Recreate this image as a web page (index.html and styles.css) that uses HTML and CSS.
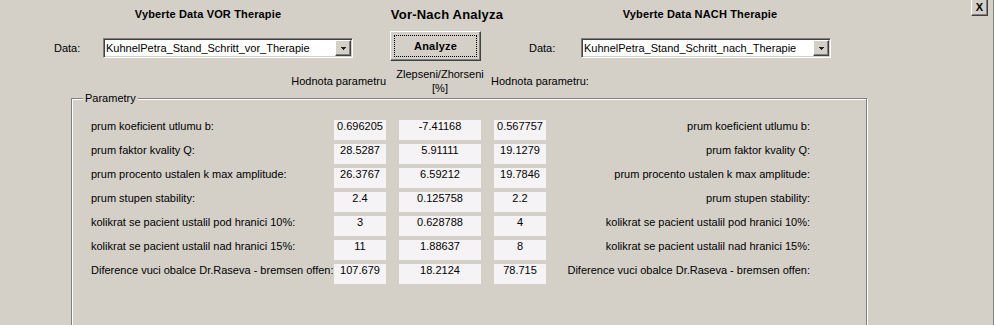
FILE: index.html
```html
<!DOCTYPE html>
<html lang="cs">
  <head>
    <meta charset="UTF-8" />
    <meta name="viewport" content="width=device-width, initial-scale=1.0" />
    <title>Vor-Nach Analyza</title>
    <link rel="stylesheet" href="styles.css">
  </head>
  <body>
    <div class="window">
      <button class="close">X</button>

      <div class="titles">
        <div class="title t-vor">Vyberte Data VOR Therapie</div>
        <div class="title title-main">Vor-Nach Analyza</div>
        <div class="title t-nach">Vyberte Data NACH Therapie</div>
      </div>

      <div class="controls">
        <label class="data-label">Data:</label>
        <div class="select">
          <span class="select-text">KuhnelPetra_Stand_Schritt_vor_Therapie</span>
          <span class="select-arrow">
            <svg width="5" height="3" viewBox="0 0 5 3" shape-rendering="crispEdges"><rect x="0" y="0" width="5" height="1" fill="#222"/><rect x="1" y="1" width="3" height="1" fill="#222"/><rect x="2" y="2" width="1" height="1" fill="#222"/></svg>
          </span>
        </div>
        <button class="analyze">Analyze</button>
        <label class="data-label second">Data:</label>
        <div class="select">
          <span class="select-text">KuhnelPetra_Stand_Schritt_nach_Therapie</span>
          <span class="select-arrow">
            <svg width="5" height="3" viewBox="0 0 5 3" shape-rendering="crispEdges"><rect x="0" y="0" width="5" height="1" fill="#222"/><rect x="1" y="1" width="3" height="1" fill="#222"/><rect x="2" y="2" width="1" height="1" fill="#222"/></svg>
          </span>
        </div>
      </div>

      <div class="col-heads">
        <div class="head head-vor">Hodnota parametru</div>
        <div class="head head-diff">Zlepseni/Zhorseni<br>[%]</div>
        <div class="head head-nach">Hodnota parametru:</div>
      </div>

      <fieldset class="panel">
        <legend>Parametry</legend>
        <div class="rows">
          <div class="row">
            <div class="label">prum koeficient utlumu b:</div>
            <div class="val">0.696205</div>
            <div class="val wide">-7.41168</div>
            <div class="val">0.567757</div>
            <div class="rlabel">prum koeficient utlumu b:</div>
          </div>
          <div class="row">
            <div class="label">prum faktor kvality Q:</div>
            <div class="val">28.5287</div>
            <div class="val wide">5.91111</div>
            <div class="val">19.1279</div>
            <div class="rlabel">prum faktor kvality Q:</div>
          </div>
          <div class="row">
            <div class="label">prum procento ustalen k max amplitude:</div>
            <div class="val">26.3767</div>
            <div class="val wide">6.59212</div>
            <div class="val">19.7846</div>
            <div class="rlabel">prum procento ustalen k max amplitude:</div>
          </div>
          <div class="row">
            <div class="label">prum stupen stability:</div>
            <div class="val">2.4</div>
            <div class="val wide">0.125758</div>
            <div class="val">2.2</div>
            <div class="rlabel">prum stupen stability:</div>
          </div>
          <div class="row">
            <div class="label">kolikrat se pacient ustalil pod hranici 10%:</div>
            <div class="val">3</div>
            <div class="val wide">0.628788</div>
            <div class="val">4</div>
            <div class="rlabel">kolikrat se pacient ustalil pod hranici 10%:</div>
          </div>
          <div class="row">
            <div class="label">kolikrat se pacient ustalil nad hranici 15%:</div>
            <div class="val">11</div>
            <div class="val wide">1.88637</div>
            <div class="val">8</div>
            <div class="rlabel">kolikrat se pacient ustalil nad hranici 15%:</div>
          </div>
          <div class="row">
            <div class="label">Diference vuci obalce Dr.Raseva - bremsen offen:</div>
            <div class="val">107.679</div>
            <div class="val wide">18.2124</div>
            <div class="val">78.715</div>
            <div class="rlabel">Diference vuci obalce Dr.Raseva - bremsen offen:</div>
          </div>
        </div>
      </fieldset>
    </div>
  </body>
</html>
```

FILE: styles.css
```css
html,
body {
  margin: 0;
  background-color: #d4d0c8;
}
body {
  font-family: "Liberation Sans", Arial, sans-serif;
  font-size: 11px;
  line-height: 13px;
  color: #000;
}
.window {
  position: relative;
  width: 993px;
  height: 325px;
  border-right: 1px solid #808080;
  overflow: hidden;
}
.close {
  position: absolute;
  top: -2px;
  right: 5px;
  width: 17px;
  height: 18px;
  padding: 1px 0 0;
  background-color: #d4d0c8;
  border: 1px solid;
  border-color: #fff #404040 #404040 #fff;
  box-shadow: inset -1px -1px 0 #808080;
  font-family: "Liberation Sans", Arial, sans-serif;
  font-size: 11px;
  font-weight: bold;
  line-height: 13px;
}

/* top titles */
.titles {
  display: flex;
  height: 31px;
  align-items: flex-start;
}
.title {
  width: 200px;
  text-align: center;
  font-weight: bold;
  margin-top: 8px;
  letter-spacing: 0.15px;
}
.t-vor {
  margin-left: 108px;
}
.title-main {
  margin-left: 39px;
  font-size: 13px;
  line-height: 15px;
  margin-top: 7px;
  letter-spacing: 0.2px;
}
.t-nach {
  margin-left: 53px;
}

/* select row */
.controls {
  display: flex;
  height: 31px;
  align-items: flex-start;
}
.data-label {
  width: 49px;
  margin-left: 54px;
  margin-top: 11px;
}
.data-label.second {
  width: 52px;
  margin-left: 48px;
}
.select {
  display: flex;
  box-sizing: border-box;
  width: 250px;
  height: 20px;
  margin-top: 7px;
  background-color: #fff;
  border: 1px solid;
  border-color: #808080 #fff #fff #808080;
  box-shadow: inset 1px 1px 0 #404040, inset -1px -1px 0 #d4d0c8;
  padding: 1px;
}
.select-text {
  flex: 1;
  padding: 1px 0 0 1px;
  line-height: 15px;
  white-space: nowrap;
  overflow: hidden;
}
.select-arrow {
  display: flex;
  align-items: center;
  justify-content: center;
  box-sizing: border-box;
  width: 16px;
  height: 16px;
  background-color: #d4d0c8;
  border: 1px solid;
  border-color: #fff #404040 #404040 #fff;
  box-shadow: inset -1px -1px 0 #808080;
}
.analyze {
  box-sizing: border-box;
  width: 91px;
  height: 30px;
  margin-left: 37px;
  padding: 0;
  background-color: #d4d0c8;
  border: 1px solid;
  border-color: #fff #404040 #404040 #fff;
  box-shadow: inset -1px -1px 0 #808080;
  outline: 1px dotted #000;
  outline-offset: -5px;
  font-family: "Liberation Sans", Arial, sans-serif;
  font-size: 11px;
  font-weight: bold;
  letter-spacing: 0.2px;
  color: #000;
}

/* column headers */
.col-heads {
  display: flex;
  height: 30px;
  align-items: flex-start;
}
.head-vor {
  width: 200px;
  margin-left: 186px;
  margin-top: 13px;
  text-align: right;
}
.head-diff {
  width: 104px;
  margin-left: 2px;
  margin-top: 5px;
  line-height: 14px;
  text-align: center;
}
.head-nach {
  margin-left: -1px;
  margin-top: 13px;
}

/* parameter panel */
.panel {
  box-sizing: border-box;
  width: 796px;
  height: 260px;
  margin: 0 0 0 71px;
  padding: 0;
  border: 1px solid #808080;
  box-shadow: inset 1px 1px 0 #fff, 1px 1px 0 #fff;
  min-width: 0;
}
.panel legend {
  margin-left: 11px;
  padding: 0 2px;
  background-color: #d4d0c8;
  line-height: 13px;
}
.rows {
  margin: 15px 0 0 19px;
}
.row {
  display: flex;
  height: 24px;
  align-items: flex-start;
}
.label {
  width: 243px;
  white-space: nowrap;
}
.val {
  width: 52px;
  height: 20px;
  background-color: #f6f3f6;
  text-align: center;
}
.val.wide {
  width: 82px;
  margin: 0 13px;
}
.rlabel {
  width: 264px;
  text-align: right;
  white-space: nowrap;
}
```
